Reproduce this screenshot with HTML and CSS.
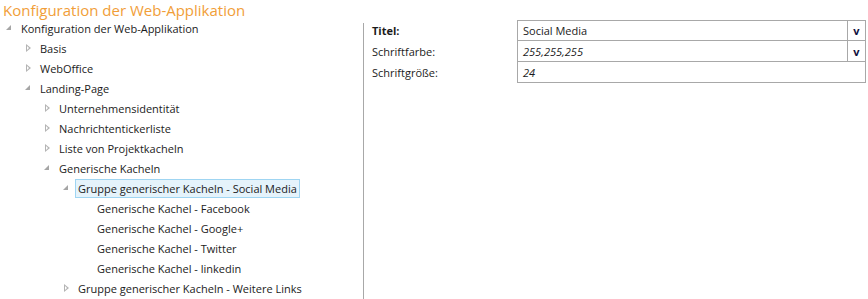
FILE: index.html
```html
<!DOCTYPE html>
<html lang="de">
<head>
  <meta charset="UTF-8" />
  <title>Konfiguration der Web-Applikation</title>
  <link rel="stylesheet" href="styles.css">
</head>
<body>
<h1 class="page-title">Konfiguration der Web-Applikation</h1>

<div class="main">
  <ul class="tree">
    <li class="node lvl0"><span class="arrow open"></span><span class="label">Konfiguration der Web-Applikation</span></li>
    <li class="node lvl1"><span class="arrow closed"></span><span class="label">Basis</span></li>
    <li class="node lvl1"><span class="arrow closed"></span><span class="label">WebOffice</span></li>
    <li class="node lvl1"><span class="arrow open"></span><span class="label">Landing-Page</span></li>
    <li class="node lvl2"><span class="arrow closed"></span><span class="label">Unternehmensidentität</span></li>
    <li class="node lvl2"><span class="arrow closed"></span><span class="label">Nachrichtentickerliste</span></li>
    <li class="node lvl2"><span class="arrow closed"></span><span class="label">Liste von Projektkacheln</span></li>
    <li class="node lvl2"><span class="arrow open"></span><span class="label">Generische Kacheln</span></li>
    <li class="node lvl3"><span class="arrow open"></span><span class="label selected">Gruppe generischer Kacheln - Social Media</span></li>
    <li class="node lvl4"><span class="arrow"></span><span class="label">Generische Kachel - Facebook</span></li>
    <li class="node lvl4"><span class="arrow"></span><span class="label">Generische Kachel - Google+</span></li>
    <li class="node lvl4"><span class="arrow"></span><span class="label">Generische Kachel - Twitter</span></li>
    <li class="node lvl4"><span class="arrow"></span><span class="label">Generische Kachel - linkedin</span></li>
    <li class="node lvl3"><span class="arrow closed"></span><span class="label">Gruppe generischer Kacheln - Weitere Links</span></li>
  </ul>

  <div class="splitter"></div>

  <div class="props">
    <div class="prop-label bold">Titel:</div>
    <div class="field first">
      <span class="value">Social Media</span>
      <span class="drop">v</span>
    </div>
    <div class="prop-label">Schriftfarbe:</div>
    <div class="field">
      <span class="value italic">255,255,255</span>
      <span class="drop">v</span>
    </div>
    <div class="prop-label">Schriftgröße:</div>
    <div class="field">
      <span class="value italic">24</span>
    </div>
  </div>
</div>
</body>
</html>
```

FILE: styles.css
```css
* {
  margin: 0;
  padding: 0;
  box-sizing: border-box;
}
body {
  background: #fff;
  font-family: "Open Sans", "Noto Sans", sans-serif;
  font-size: 11px;
  color: #1b1b1b;
  overflow: hidden;
}
.page-title {
  font-weight: normal;
  font-size: 15px;
  line-height: 18px;
  height: 19px;
  padding: 1px 0 0 3px;
  color: #f19e38;
}
.main {
  display: flex;
  align-items: flex-start;
  height: 280px;
  overflow: hidden;
}
.tree {
  list-style: none;
  width: 363px;
  flex: none;
  margin-top: -1px;
}
.node {
  display: flex;
  align-items: center;
  height: 20px;
}
.lvl1 { padding-left: 19px; }
.lvl2 { padding-left: 38px; }
.lvl3 { padding-left: 57px; }
.lvl4 { padding-left: 76px; }
.arrow {
  width: 18px;
  height: 20px;
  flex: none;
  position: relative;
}
.arrow.closed::before {
  content: "";
  position: absolute;
  left: 7px;
  top: 6px;
  border-left: 5px solid #b4b4b4;
  border-top: 4px solid transparent;
  border-bottom: 4px solid transparent;
}
.arrow.closed::after {
  content: "";
  position: absolute;
  left: 8px;
  top: 8px;
  border-left: 2px solid #fff;
  border-top: 2px solid transparent;
  border-bottom: 2px solid transparent;
}
.arrow.open::before {
  content: "";
  position: absolute;
  left: 6px;
  top: 7px;
  border-bottom: 5px solid #a6a6a6;
  border-left: 5px solid transparent;
}
.label {
  border: 1px solid transparent;
  padding: 0 2px;
  line-height: 17px;
  white-space: nowrap;
}
.label.selected {
  background: #e5f3fb;
  border-color: #9fd5f2;
}
.splitter {
  width: 1px;
  margin-top: 4px;
  align-self: stretch;
  background: #a8a8a8;
  flex: none;
}
.props {
  flex: 1;
  display: grid;
  grid-template-columns: 145px 349px;
  padding-left: 8px;
  margin-top: 1px;
}
.prop-label {
  display: flex;
  align-items: center;
  height: 21px;
}
.bold {
  font-weight: bold;
}
.field {
  display: flex;
  height: 21px;
  border: 1px solid #a8a8a8;
  border-top: none;
}
.field.first {
  border-top: 1px solid #a8a8a8;
}
.value {
  flex: 1;
  padding-left: 5px;
  display: flex;
  align-items: center;
}
.italic {
  font-style: italic;
}
.drop {
  width: 18px;
  flex: none;
  border-left: 1px solid #a8a8a8;
  font-weight: bold;
  color: #101040;
  display: flex;
  align-items: center;
  justify-content: center;
}
```
